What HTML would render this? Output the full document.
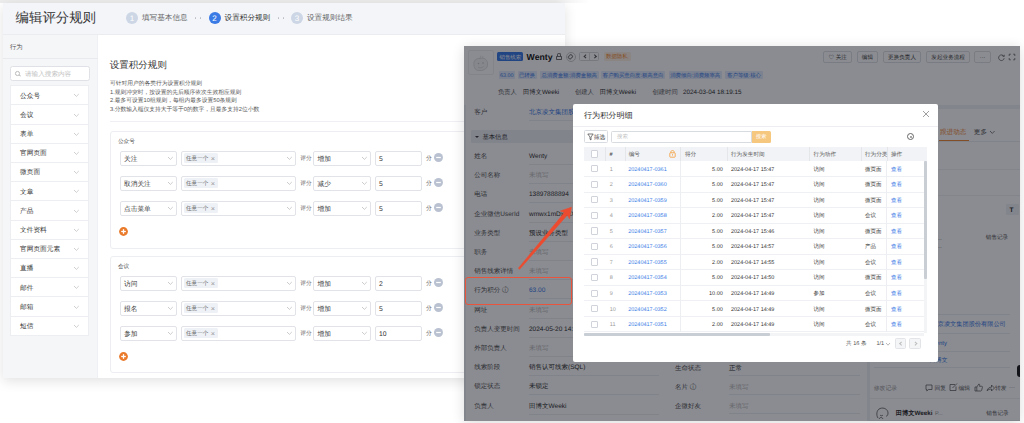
<!DOCTYPE html>
<html><head><meta charset="utf-8">
<style>
*{box-sizing:border-box;margin:0;padding:0}
html,body{width:1024px;height:423px;overflow:hidden;background:#fff;font-family:"Liberation Sans",sans-serif;color:#333;text-rendering:geometricPrecision}
.a{position:absolute}
.t{position:absolute;white-space:nowrap;line-height:1}
</style></head><body>
<div class="a" style="left:0.00px;top:0.00px;width:590.00px;height:3.00px;background:linear-gradient(to right,#ededed 0,#ededed 94%,rgba(237,237,237,0) 100%)"></div>
<div class="a" style="left:3.00px;top:2.60px;width:562.00px;height:375.40px;background:#fff;box-shadow:0 3px 12px rgba(0,0,0,.12)"></div>
<div class="a" style="left:3.00px;top:2.60px;width:562.00px;height:32.40px;background:#f3f5f9"></div>
<div class="a" style="left:3.00px;top:34.40px;width:562.00px;height:0.80px;background:#eaecf0"></div>
<div class="t" style="left:15.60px;top:11px;font-size:13.4px;color:#333;">编辑评分规则</div>
<div class="a" style="left:126.00px;top:11.80px;width:12.00px;height:12.00px;border-radius:50%;background:#cdd6e5"></div>
<div class="t" style="left:126.00px;top:15px;width:12.00px;text-align:center;font-size:8px;color:#fff;">1</div>
<div class="t" style="left:142.00px;top:14px;font-size:7.6px;color:#666;">填写基本信息</div>
<div class="a" style="left:208.60px;top:11.80px;width:12.00px;height:12.00px;border-radius:50%;background:#3b7be6"></div>
<div class="t" style="left:208.60px;top:15px;width:12.00px;text-align:center;font-size:8px;color:#fff;">2</div>
<div class="t" style="left:224.60px;top:14px;font-size:7.6px;color:#333;">设置积分规则</div>
<div class="a" style="left:291.00px;top:11.80px;width:12.00px;height:12.00px;border-radius:50%;background:#cdd6e5"></div>
<div class="t" style="left:291.00px;top:15px;width:12.00px;text-align:center;font-size:8px;color:#fff;">3</div>
<div class="t" style="left:307.00px;top:14px;font-size:7.6px;color:#666;">设置规则结果</div>
<div class="a" style="left:195.00px;top:17.40px;width:1.20px;height:1.20px;background:#b8bcc6;border-radius:50%"></div>
<div class="a" style="left:200.00px;top:17.40px;width:1.20px;height:1.20px;background:#b8bcc6;border-radius:50%"></div>
<div class="a" style="left:277.70px;top:17.40px;width:1.20px;height:1.20px;background:#b8bcc6;border-radius:50%"></div>
<div class="a" style="left:282.70px;top:17.40px;width:1.20px;height:1.20px;background:#b8bcc6;border-radius:50%"></div>
<div class="a" style="left:3.00px;top:35.00px;width:95.00px;height:343.00px;background:#f5f6f8"></div>
<div class="a" style="left:97.00px;top:35.00px;width:1.00px;height:343.00px;background:#eef0f3"></div>
<div class="a" style="left:3.00px;top:57.50px;width:95.00px;height:1.00px;background:#e8eaee"></div>
<div class="t" style="left:10.00px;top:45px;font-size:6.35px;color:#555;">行为</div>
<div class="a" style="left:10.00px;top:66.00px;width:80.00px;height:15.20px;background:#fff;border:1px solid #dfe1e6;border-radius:2.5px"></div>
<div class="a" style="left:15.00px;top:71.00px;width:4.60px;height:4.60px;border:0.8px solid #bbb;border-radius:50%"></div>
<div class="a" style="left:19.00px;top:75.00px;width:1.80px;height:0.80px;background:#bbb;transform:rotate(45deg)"></div>
<div class="t" style="left:25.00px;top:72px;font-size:6.6px;color:#c0c0c0;">请输入搜索内容</div>
<div class="a" style="left:10.40px;top:85.20px;width:79.00px;height:250.60px;background:#fff;border:1px solid #eceef2"></div>
<div class="t" style="left:20.00px;top:94px;font-size:6.7px;color:#333;">公众号</div>
<svg class="a" style="left:73.20px;top:93.30px" width="6.80" height="4.40"><polyline points="1,1 3.40,3.40 5.80,1" fill="none" stroke="#b5b5b5" stroke-width="0.65"/></svg>
<div class="a" style="left:10.40px;top:104.40px;width:79.00px;height:1.00px;background:#eceef2"></div>
<div class="t" style="left:20.00px;top:113px;font-size:6.7px;color:#333;">会议</div>
<svg class="a" style="left:73.20px;top:112.50px" width="6.80" height="4.40"><polyline points="1,1 3.40,3.40 5.80,1" fill="none" stroke="#b5b5b5" stroke-width="0.65"/></svg>
<div class="a" style="left:10.40px;top:123.60px;width:79.00px;height:1.00px;background:#eceef2"></div>
<div class="t" style="left:20.00px;top:132px;font-size:6.7px;color:#333;">表单</div>
<svg class="a" style="left:73.20px;top:131.70px" width="6.80" height="4.40"><polyline points="1,1 3.40,3.40 5.80,1" fill="none" stroke="#b5b5b5" stroke-width="0.65"/></svg>
<div class="a" style="left:10.40px;top:142.80px;width:79.00px;height:1.00px;background:#eceef2"></div>
<div class="t" style="left:20.00px;top:151px;font-size:6.7px;color:#333;">官网页面</div>
<svg class="a" style="left:73.20px;top:150.90px" width="6.80" height="4.40"><polyline points="1,1 3.40,3.40 5.80,1" fill="none" stroke="#b5b5b5" stroke-width="0.65"/></svg>
<div class="a" style="left:10.40px;top:162.00px;width:79.00px;height:1.00px;background:#eceef2"></div>
<div class="t" style="left:20.00px;top:170px;font-size:6.7px;color:#333;">微页面</div>
<svg class="a" style="left:73.20px;top:170.10px" width="6.80" height="4.40"><polyline points="1,1 3.40,3.40 5.80,1" fill="none" stroke="#b5b5b5" stroke-width="0.65"/></svg>
<div class="a" style="left:10.40px;top:181.20px;width:79.00px;height:1.00px;background:#eceef2"></div>
<div class="t" style="left:20.00px;top:190px;font-size:6.7px;color:#333;">文章</div>
<svg class="a" style="left:73.20px;top:189.30px" width="6.80" height="4.40"><polyline points="1,1 3.40,3.40 5.80,1" fill="none" stroke="#b5b5b5" stroke-width="0.65"/></svg>
<div class="a" style="left:10.40px;top:200.40px;width:79.00px;height:1.00px;background:#eceef2"></div>
<div class="t" style="left:20.00px;top:209px;font-size:6.7px;color:#333;">产品</div>
<svg class="a" style="left:73.20px;top:208.50px" width="6.80" height="4.40"><polyline points="1,1 3.40,3.40 5.80,1" fill="none" stroke="#b5b5b5" stroke-width="0.65"/></svg>
<div class="a" style="left:10.40px;top:219.60px;width:79.00px;height:1.00px;background:#eceef2"></div>
<div class="t" style="left:20.00px;top:228px;font-size:6.7px;color:#333;">文件资料</div>
<svg class="a" style="left:73.20px;top:227.70px" width="6.80" height="4.40"><polyline points="1,1 3.40,3.40 5.80,1" fill="none" stroke="#b5b5b5" stroke-width="0.65"/></svg>
<div class="a" style="left:10.40px;top:238.80px;width:79.00px;height:1.00px;background:#eceef2"></div>
<div class="t" style="left:20.00px;top:247px;font-size:6.7px;color:#333;">官网页面元素</div>
<svg class="a" style="left:73.20px;top:246.90px" width="6.80" height="4.40"><polyline points="1,1 3.40,3.40 5.80,1" fill="none" stroke="#b5b5b5" stroke-width="0.65"/></svg>
<div class="a" style="left:10.40px;top:258.00px;width:79.00px;height:1.00px;background:#eceef2"></div>
<div class="t" style="left:20.00px;top:266px;font-size:6.7px;color:#333;">直播</div>
<svg class="a" style="left:73.20px;top:266.10px" width="6.80" height="4.40"><polyline points="1,1 3.40,3.40 5.80,1" fill="none" stroke="#b5b5b5" stroke-width="0.65"/></svg>
<div class="a" style="left:10.40px;top:277.20px;width:79.00px;height:1.00px;background:#eceef2"></div>
<div class="t" style="left:20.00px;top:286px;font-size:6.7px;color:#333;">邮件</div>
<svg class="a" style="left:73.20px;top:285.30px" width="6.80" height="4.40"><polyline points="1,1 3.40,3.40 5.80,1" fill="none" stroke="#b5b5b5" stroke-width="0.65"/></svg>
<div class="a" style="left:10.40px;top:296.40px;width:79.00px;height:1.00px;background:#eceef2"></div>
<div class="t" style="left:20.00px;top:305px;font-size:6.7px;color:#333;">邮箱</div>
<svg class="a" style="left:73.20px;top:304.50px" width="6.80" height="4.40"><polyline points="1,1 3.40,3.40 5.80,1" fill="none" stroke="#b5b5b5" stroke-width="0.65"/></svg>
<div class="a" style="left:10.40px;top:315.60px;width:79.00px;height:1.00px;background:#eceef2"></div>
<div class="t" style="left:20.00px;top:324px;font-size:6.7px;color:#333;">短信</div>
<svg class="a" style="left:73.20px;top:323.70px" width="6.80" height="4.40"><polyline points="1,1 3.40,3.40 5.80,1" fill="none" stroke="#b5b5b5" stroke-width="0.65"/></svg>
<div class="t" style="left:109.80px;top:61px;font-size:9.5px;color:#333;">设置积分规则</div>
<div class="t" style="left:110.00px;top:82px;font-size:5.75px;color:#555;">可针对用户的各类行为设置积分规则</div>
<div class="t" style="left:110.00px;top:91px;font-size:5.75px;color:#555;">1.规则冲突时，按设置的先后顺序依次生效相应规则</div>
<div class="t" style="left:110.00px;top:99px;font-size:5.75px;color:#555;">2.最多可设置10组规则，每组内最多设置50条规则</div>
<div class="t" style="left:110.00px;top:108px;font-size:5.75px;color:#555;">3.分数输入框仅支持大于等于0的数字，且最多支持2位小数</div>
<div class="a" style="left:110.00px;top:121.00px;width:455.00px;height:1.00px;background:#eef0f3"></div>
<div class="a" style="left:109.50px;top:131.40px;width:456.00px;height:117.60px;border:0.8px solid #eceef1;border-radius:3px"></div>
<div class="t" style="left:118.00px;top:140px;font-size:5.6px;color:#444;">公众号</div>
<div class="a" style="left:120.00px;top:150.60px;width:56.60px;height:15.00px;background:#fff;border:1px solid #e1e3e8;border-radius:2px"></div>
<div class="t" style="left:124.00px;top:157px;font-size:6.7px;color:#333;">关注</div>
<svg class="a" style="left:166.60px;top:156.20px" width="6.80" height="4.40"><polyline points="1,1 3.40,3.40 5.80,1" fill="none" stroke="#b0b0b0" stroke-width="0.65"/></svg>
<div class="a" style="left:181.30px;top:150.60px;width:114.50px;height:15.00px;background:#fff;border:1px solid #e1e3e8;border-radius:2px"></div>
<div class="a" style="left:184.40px;top:152.80px;width:33.40px;height:10.60px;background:#eef1f6;border-radius:1.5px"></div>
<div class="t" style="left:186.00px;top:157px;font-size:5.6px;color:#555;">任意一个</div>
<div class="t" style="left:210.80px;top:155px;font-size:7.4px;color:#999;">×</div>
<svg class="a" style="left:286.10px;top:156.20px" width="6.80" height="4.40"><polyline points="1,1 3.40,3.40 5.80,1" fill="none" stroke="#b0b0b0" stroke-width="0.65"/></svg>
<div class="t" style="left:300.30px;top:157px;font-size:5.7px;color:#666;">评分</div>
<div class="a" style="left:313.40px;top:150.60px;width:57.20px;height:15.00px;background:#fff;border:1px solid #e1e3e8;border-radius:2px"></div>
<div class="t" style="left:317.50px;top:157px;font-size:6.7px;color:#333;">增加</div>
<svg class="a" style="left:361.10px;top:156.20px" width="6.80" height="4.40"><polyline points="1,1 3.40,3.40 5.80,1" fill="none" stroke="#b0b0b0" stroke-width="0.65"/></svg>
<div class="a" style="left:374.90px;top:150.60px;width:47.40px;height:15.00px;background:#fff;border:1px solid #e1e3e8;border-radius:2px"></div>
<div class="t" style="left:379.00px;top:157px;font-size:6.8px;color:#333;">5</div>
<div class="t" style="left:426.00px;top:157px;font-size:5.8px;color:#555;">分</div>
<svg class="a" style="left:433.90px;top:153.10px" width="9" height="9" viewBox="0 0 9 9"><circle cx="4.5" cy="4.5" r="4.5" fill="#bac2d1"/><rect x="2.2" y="3.9" width="4.6" height="1.2" fill="#fff"/></svg>
<div class="a" style="left:120.00px;top:175.60px;width:56.60px;height:15.00px;background:#fff;border:1px solid #e1e3e8;border-radius:2px"></div>
<div class="t" style="left:124.00px;top:182px;font-size:6.7px;color:#333;">取消关注</div>
<svg class="a" style="left:166.60px;top:181.20px" width="6.80" height="4.40"><polyline points="1,1 3.40,3.40 5.80,1" fill="none" stroke="#b0b0b0" stroke-width="0.65"/></svg>
<div class="a" style="left:181.30px;top:175.60px;width:114.50px;height:15.00px;background:#fff;border:1px solid #e1e3e8;border-radius:2px"></div>
<div class="a" style="left:184.40px;top:177.80px;width:33.40px;height:10.60px;background:#eef1f6;border-radius:1.5px"></div>
<div class="t" style="left:186.00px;top:182px;font-size:5.6px;color:#555;">任意一个</div>
<div class="t" style="left:210.80px;top:180px;font-size:7.4px;color:#999;">×</div>
<svg class="a" style="left:286.10px;top:181.20px" width="6.80" height="4.40"><polyline points="1,1 3.40,3.40 5.80,1" fill="none" stroke="#b0b0b0" stroke-width="0.65"/></svg>
<div class="t" style="left:300.30px;top:182px;font-size:5.7px;color:#666;">评分</div>
<div class="a" style="left:313.40px;top:175.60px;width:57.20px;height:15.00px;background:#fff;border:1px solid #e1e3e8;border-radius:2px"></div>
<div class="t" style="left:317.50px;top:182px;font-size:6.7px;color:#333;">减少</div>
<svg class="a" style="left:361.10px;top:181.20px" width="6.80" height="4.40"><polyline points="1,1 3.40,3.40 5.80,1" fill="none" stroke="#b0b0b0" stroke-width="0.65"/></svg>
<div class="a" style="left:374.90px;top:175.60px;width:47.40px;height:15.00px;background:#fff;border:1px solid #e1e3e8;border-radius:2px"></div>
<div class="t" style="left:379.00px;top:182px;font-size:6.8px;color:#333;">5</div>
<div class="t" style="left:426.00px;top:182px;font-size:5.8px;color:#555;">分</div>
<svg class="a" style="left:433.90px;top:178.10px" width="9" height="9" viewBox="0 0 9 9"><circle cx="4.5" cy="4.5" r="4.5" fill="#bac2d1"/><rect x="2.2" y="3.9" width="4.6" height="1.2" fill="#fff"/></svg>
<div class="a" style="left:120.00px;top:200.60px;width:56.60px;height:15.00px;background:#fff;border:1px solid #e1e3e8;border-radius:2px"></div>
<div class="t" style="left:124.00px;top:207px;font-size:6.7px;color:#333;">点击菜单</div>
<svg class="a" style="left:166.60px;top:206.20px" width="6.80" height="4.40"><polyline points="1,1 3.40,3.40 5.80,1" fill="none" stroke="#b0b0b0" stroke-width="0.65"/></svg>
<div class="a" style="left:181.30px;top:200.60px;width:114.50px;height:15.00px;background:#fff;border:1px solid #e1e3e8;border-radius:2px"></div>
<div class="a" style="left:184.40px;top:202.80px;width:33.40px;height:10.60px;background:#eef1f6;border-radius:1.5px"></div>
<div class="t" style="left:186.00px;top:207px;font-size:5.6px;color:#555;">任意一个</div>
<div class="t" style="left:210.80px;top:205px;font-size:7.4px;color:#999;">×</div>
<svg class="a" style="left:286.10px;top:206.20px" width="6.80" height="4.40"><polyline points="1,1 3.40,3.40 5.80,1" fill="none" stroke="#b0b0b0" stroke-width="0.65"/></svg>
<div class="t" style="left:300.30px;top:207px;font-size:5.7px;color:#666;">评分</div>
<div class="a" style="left:313.40px;top:200.60px;width:57.20px;height:15.00px;background:#fff;border:1px solid #e1e3e8;border-radius:2px"></div>
<div class="t" style="left:317.50px;top:207px;font-size:6.7px;color:#333;">增加</div>
<svg class="a" style="left:361.10px;top:206.20px" width="6.80" height="4.40"><polyline points="1,1 3.40,3.40 5.80,1" fill="none" stroke="#b0b0b0" stroke-width="0.65"/></svg>
<div class="a" style="left:374.90px;top:200.60px;width:47.40px;height:15.00px;background:#fff;border:1px solid #e1e3e8;border-radius:2px"></div>
<div class="t" style="left:379.00px;top:207px;font-size:6.8px;color:#333;">5</div>
<div class="t" style="left:426.00px;top:207px;font-size:5.8px;color:#555;">分</div>
<svg class="a" style="left:433.90px;top:203.10px" width="9" height="9" viewBox="0 0 9 9"><circle cx="4.5" cy="4.5" r="4.5" fill="#bac2d1"/><rect x="2.2" y="3.9" width="4.6" height="1.2" fill="#fff"/></svg>
<svg class="a" style="left:119.30px;top:227.20px" width="9" height="9" viewBox="0 0 9 9"><circle cx="4.5" cy="4.5" r="4.4" fill="#ea7b2c"/><rect x="2.2" y="3.85" width="4.6" height="1.3" fill="#fff"/><rect x="3.85" y="2.2" width="1.3" height="4.6" fill="#fff"/></svg>
<div class="a" style="left:109.50px;top:256.40px;width:456.00px;height:117.10px;border:0.8px solid #eceef1;border-radius:3px"></div>
<div class="t" style="left:118.00px;top:265px;font-size:5.6px;color:#444;">会议</div>
<div class="a" style="left:120.00px;top:275.60px;width:56.60px;height:15.00px;background:#fff;border:1px solid #e1e3e8;border-radius:2px"></div>
<div class="t" style="left:124.00px;top:282px;font-size:6.7px;color:#333;">访问</div>
<svg class="a" style="left:166.60px;top:281.20px" width="6.80" height="4.40"><polyline points="1,1 3.40,3.40 5.80,1" fill="none" stroke="#b0b0b0" stroke-width="0.65"/></svg>
<div class="a" style="left:181.30px;top:275.60px;width:114.50px;height:15.00px;background:#fff;border:1px solid #e1e3e8;border-radius:2px"></div>
<div class="a" style="left:184.40px;top:277.80px;width:33.40px;height:10.60px;background:#eef1f6;border-radius:1.5px"></div>
<div class="t" style="left:186.00px;top:282px;font-size:5.6px;color:#555;">任意一个</div>
<div class="t" style="left:210.80px;top:280px;font-size:7.4px;color:#999;">×</div>
<svg class="a" style="left:286.10px;top:281.20px" width="6.80" height="4.40"><polyline points="1,1 3.40,3.40 5.80,1" fill="none" stroke="#b0b0b0" stroke-width="0.65"/></svg>
<div class="t" style="left:300.30px;top:282px;font-size:5.7px;color:#666;">评分</div>
<div class="a" style="left:313.40px;top:275.60px;width:57.20px;height:15.00px;background:#fff;border:1px solid #e1e3e8;border-radius:2px"></div>
<div class="t" style="left:317.50px;top:282px;font-size:6.7px;color:#333;">增加</div>
<svg class="a" style="left:361.10px;top:281.20px" width="6.80" height="4.40"><polyline points="1,1 3.40,3.40 5.80,1" fill="none" stroke="#b0b0b0" stroke-width="0.65"/></svg>
<div class="a" style="left:374.90px;top:275.60px;width:47.40px;height:15.00px;background:#fff;border:1px solid #e1e3e8;border-radius:2px"></div>
<div class="t" style="left:379.00px;top:282px;font-size:6.8px;color:#333;">2</div>
<div class="t" style="left:426.00px;top:282px;font-size:5.8px;color:#555;">分</div>
<svg class="a" style="left:433.90px;top:278.10px" width="9" height="9" viewBox="0 0 9 9"><circle cx="4.5" cy="4.5" r="4.5" fill="#bac2d1"/><rect x="2.2" y="3.9" width="4.6" height="1.2" fill="#fff"/></svg>
<div class="a" style="left:120.00px;top:300.60px;width:56.60px;height:15.00px;background:#fff;border:1px solid #e1e3e8;border-radius:2px"></div>
<div class="t" style="left:124.00px;top:307px;font-size:6.7px;color:#333;">报名</div>
<svg class="a" style="left:166.60px;top:306.20px" width="6.80" height="4.40"><polyline points="1,1 3.40,3.40 5.80,1" fill="none" stroke="#b0b0b0" stroke-width="0.65"/></svg>
<div class="a" style="left:181.30px;top:300.60px;width:114.50px;height:15.00px;background:#fff;border:1px solid #e1e3e8;border-radius:2px"></div>
<div class="a" style="left:184.40px;top:302.80px;width:33.40px;height:10.60px;background:#eef1f6;border-radius:1.5px"></div>
<div class="t" style="left:186.00px;top:307px;font-size:5.6px;color:#555;">任意一个</div>
<div class="t" style="left:210.80px;top:305px;font-size:7.4px;color:#999;">×</div>
<svg class="a" style="left:286.10px;top:306.20px" width="6.80" height="4.40"><polyline points="1,1 3.40,3.40 5.80,1" fill="none" stroke="#b0b0b0" stroke-width="0.65"/></svg>
<div class="t" style="left:300.30px;top:307px;font-size:5.7px;color:#666;">评分</div>
<div class="a" style="left:313.40px;top:300.60px;width:57.20px;height:15.00px;background:#fff;border:1px solid #e1e3e8;border-radius:2px"></div>
<div class="t" style="left:317.50px;top:307px;font-size:6.7px;color:#333;">增加</div>
<svg class="a" style="left:361.10px;top:306.20px" width="6.80" height="4.40"><polyline points="1,1 3.40,3.40 5.80,1" fill="none" stroke="#b0b0b0" stroke-width="0.65"/></svg>
<div class="a" style="left:374.90px;top:300.60px;width:47.40px;height:15.00px;background:#fff;border:1px solid #e1e3e8;border-radius:2px"></div>
<div class="t" style="left:379.00px;top:307px;font-size:6.8px;color:#333;">5</div>
<div class="t" style="left:426.00px;top:307px;font-size:5.8px;color:#555;">分</div>
<svg class="a" style="left:433.90px;top:303.10px" width="9" height="9" viewBox="0 0 9 9"><circle cx="4.5" cy="4.5" r="4.5" fill="#bac2d1"/><rect x="2.2" y="3.9" width="4.6" height="1.2" fill="#fff"/></svg>
<div class="a" style="left:120.00px;top:325.60px;width:56.60px;height:15.00px;background:#fff;border:1px solid #e1e3e8;border-radius:2px"></div>
<div class="t" style="left:124.00px;top:332px;font-size:6.7px;color:#333;">参加</div>
<svg class="a" style="left:166.60px;top:331.20px" width="6.80" height="4.40"><polyline points="1,1 3.40,3.40 5.80,1" fill="none" stroke="#b0b0b0" stroke-width="0.65"/></svg>
<div class="a" style="left:181.30px;top:325.60px;width:114.50px;height:15.00px;background:#fff;border:1px solid #e1e3e8;border-radius:2px"></div>
<div class="a" style="left:184.40px;top:327.80px;width:33.40px;height:10.60px;background:#eef1f6;border-radius:1.5px"></div>
<div class="t" style="left:186.00px;top:332px;font-size:5.6px;color:#555;">任意一个</div>
<div class="t" style="left:210.80px;top:330px;font-size:7.4px;color:#999;">×</div>
<svg class="a" style="left:286.10px;top:331.20px" width="6.80" height="4.40"><polyline points="1,1 3.40,3.40 5.80,1" fill="none" stroke="#b0b0b0" stroke-width="0.65"/></svg>
<div class="t" style="left:300.30px;top:332px;font-size:5.7px;color:#666;">评分</div>
<div class="a" style="left:313.40px;top:325.60px;width:57.20px;height:15.00px;background:#fff;border:1px solid #e1e3e8;border-radius:2px"></div>
<div class="t" style="left:317.50px;top:332px;font-size:6.7px;color:#333;">增加</div>
<svg class="a" style="left:361.10px;top:331.20px" width="6.80" height="4.40"><polyline points="1,1 3.40,3.40 5.80,1" fill="none" stroke="#b0b0b0" stroke-width="0.65"/></svg>
<div class="a" style="left:374.90px;top:325.60px;width:47.40px;height:15.00px;background:#fff;border:1px solid #e1e3e8;border-radius:2px"></div>
<div class="t" style="left:379.00px;top:332px;font-size:6.8px;color:#333;">10</div>
<div class="t" style="left:426.00px;top:332px;font-size:5.8px;color:#555;">分</div>
<svg class="a" style="left:433.90px;top:328.10px" width="9" height="9" viewBox="0 0 9 9"><circle cx="4.5" cy="4.5" r="4.5" fill="#bac2d1"/><rect x="2.2" y="3.9" width="4.6" height="1.2" fill="#fff"/></svg>
<svg class="a" style="left:119.30px;top:352.20px" width="9" height="9" viewBox="0 0 9 9"><circle cx="4.5" cy="4.5" r="4.4" fill="#ea7b2c"/><rect x="2.2" y="3.85" width="4.6" height="1.3" fill="#fff"/><rect x="3.85" y="2.2" width="1.3" height="4.6" fill="#fff"/></svg>
<div class="a" style="left:464.00px;top:46.00px;width:556.00px;height:374.50px;background:#f0f2f5;box-shadow:0 2px 12px rgba(0,0,0,.14)"></div>
<div class="a" style="left:464.00px;top:46.00px;width:556.00px;height:58.50px;background:#fff"></div>
<div class="a" style="left:467.70px;top:50.00px;width:26.30px;height:25.40px;background:#fff;border:0.6px solid #f0f1f3;border-radius:2px"></div>
<svg class="a" style="left:470.00px;top:52.00px" width="22" height="22" viewBox="0 0 22 22"><path d="M4,13 C3,9 6,6 10,6.5 C14,5 18,8 17.5,12 C18,16 14,19 10,18.5 C6,19 4,16.5 4,13 Z" fill="#f6f6f7" stroke="#d5d6d9" stroke-width="0.7"/><circle cx="8.5" cy="11.5" r="0.8" fill="#c8c9cc"/><circle cx="13" cy="11" r="0.8" fill="#c8c9cc"/><path d="M8,15 C10,16.5 12,16 13.5,14.5" fill="none" stroke="#cfd0d3" stroke-width="0.6"/><path d="M10,6.5 L11,3.5 M13,4 L12.5,6" stroke="#d5d6d9" stroke-width="0.6"/></svg>
<div class="a" style="left:497.30px;top:52.30px;width:26.10px;height:8.80px;background:#3b7be6;border-radius:1.5px"></div>
<div class="t" style="left:499.50px;top:56px;font-size:5.4px;color:#fff;">销售线索</div>
<div class="t" style="left:526.60px;top:53px;font-size:8.7px;color:#222;font-weight:bold">Wenty</div>
<div class="a" style="left:555.50px;top:55.60px;width:6.40px;height:4.60px;border:0.8px solid #777;border-radius:0.8px"></div>
<div class="a" style="left:556.80px;top:52.60px;width:3.80px;height:4.00px;border:0.8px solid #777;border-bottom:none;border-radius:2px 2px 0 0"></div>
<div class="a" style="left:565.50px;top:51.50px;width:10.00px;height:10.00px;border:0.8px solid #ccc;border-radius:50%"></div>
<div class="a" style="left:568.00px;top:54.50px;width:4.50px;height:4.00px;border:0.8px solid #888;border-radius:1px;transform:rotate(-45deg)"></div>
<div class="a" style="left:579.30px;top:51.60px;width:20.20px;height:9.80px;border:0.8px solid #d8dbe0;border-radius:1.5px"></div>
<div class="a" style="left:589.40px;top:51.60px;width:0.80px;height:9.80px;background:#d8dbe0"></div>
<div class="a" style="left:583.5px;top:54.6px;width:3.4px;height:3.4px;border-left:0.8px solid #555;border-bottom:0.8px solid #555;transform:rotate(45deg)"></div>
<div class="a" style="left:592.8px;top:54.6px;width:3.4px;height:3.4px;border-right:0.8px solid #555;border-top:0.8px solid #555;transform:rotate(45deg)"></div>
<div class="a" style="left:604.20px;top:52.00px;width:26.40px;height:9.00px;background:#fdf1e6;border-radius:1.5px"></div>
<div class="t" style="left:606.00px;top:55px;font-size:5.4px;color:#f38a2c;">数据隐私</div>
<div class="a" style="left:498.50px;top:70.60px;width:16.40px;height:8.80px;background:#e4edfc;border-radius:1px"></div>
<div class="t" style="left:498.50px;top:74px;width:16.40px;text-align:center;font-size:5.4px;color:#3b7be6;">63.00</div>
<div class="a" style="left:517.50px;top:70.60px;width:19.10px;height:8.80px;background:#e4edfc;border-radius:1px"></div>
<div class="t" style="left:517.50px;top:74px;width:19.10px;text-align:center;font-size:5.4px;color:#3b7be6;">已转换</div>
<div class="a" style="left:539.50px;top:70.60px;width:59.50px;height:8.80px;background:#e4edfc;border-radius:1px"></div>
<div class="t" style="left:539.50px;top:74px;width:59.50px;text-align:center;font-size:5.4px;color:#3b7be6;">总消费金额:消费金额高</div>
<div class="a" style="left:601.30px;top:70.60px;width:63.70px;height:8.80px;background:#e4edfc;border-radius:1px"></div>
<div class="t" style="left:601.30px;top:74px;width:63.70px;text-align:center;font-size:5.4px;color:#3b7be6;">客户购买意向度:极高意向</div>
<div class="a" style="left:668.70px;top:70.60px;width:53.10px;height:8.80px;background:#e4edfc;border-radius:1px"></div>
<div class="t" style="left:668.70px;top:74px;width:53.10px;text-align:center;font-size:5.4px;color:#3b7be6;">消费倾向:消费频率高</div>
<div class="a" style="left:725.30px;top:70.60px;width:37.50px;height:8.80px;background:#e4edfc;border-radius:1px"></div>
<div class="t" style="left:725.30px;top:74px;width:37.50px;text-align:center;font-size:5.4px;color:#3b7be6;">客户等级:核心</div>
<div class="t" style="left:498.00px;top:90px;font-size:6.3px;color:#666;">负责人</div>
<div class="t" style="left:523.00px;top:90px;font-size:6.3px;color:#333;">田博文Weeki</div>
<div class="t" style="left:575.00px;top:90px;font-size:6.3px;color:#666;">创建人</div>
<div class="t" style="left:599.80px;top:90px;font-size:6.3px;color:#333;">田博文Weeki</div>
<div class="t" style="left:652.50px;top:90px;font-size:6.3px;color:#666;">创建时间</div>
<div class="t" style="left:683.00px;top:90px;font-size:6.3px;color:#333;">2024-03-04 18:19:15</div>
<div class="a" style="left:823.00px;top:50.80px;width:29.40px;height:12.10px;background:#fff;border:0.8px solid #dfe2e6;border-radius:2px"></div>
<div class="t" style="left:823.00px;top:56px;width:29.40px;text-align:center;font-size:5.6px;color:#444;">♡ 关注</div>
<div class="a" style="left:856.50px;top:50.80px;width:21.90px;height:12.10px;background:#fff;border:0.8px solid #dfe2e6;border-radius:2px"></div>
<div class="t" style="left:856.50px;top:56px;width:21.90px;text-align:center;font-size:5.6px;color:#444;">编辑</div>
<div class="a" style="left:882.80px;top:50.80px;width:38.50px;height:12.10px;background:#fff;border:0.8px solid #dfe2e6;border-radius:2px"></div>
<div class="t" style="left:882.80px;top:56px;width:38.50px;text-align:center;font-size:5.6px;color:#444;">更换负责人</div>
<div class="a" style="left:926.00px;top:50.80px;width:44.30px;height:12.10px;background:#fff;border:0.8px solid #dfe2e6;border-radius:2px"></div>
<div class="t" style="left:926.00px;top:56px;width:44.30px;text-align:center;font-size:5.6px;color:#444;">发起业务流程</div>
<div class="a" style="left:974.00px;top:50.80px;width:17.30px;height:12.10px;background:#fff;border:0.8px solid #dfe2e6;border-radius:2px"></div>
<div class="t" style="left:974.00px;top:56px;width:17.30px;text-align:center;font-size:5.6px;color:#444;">···</div>
<svg class="a" style="left:996.50px;top:52.80px" width="9" height="9" viewBox="0 0 9 9"><path d="M6.9,3.4 A2.8,2.8 0 1 0 7.2,5.2" fill="none" stroke="#555" stroke-width="0.7"/><path d="M5.4,2.9 L7.1,3.5 L7.3,1.8" fill="none" stroke="#555" stroke-width="0.7"/></svg>
<svg class="a" style="left:1008.00px;top:53.00px" width="8" height="8" viewBox="0 0 8 8"><path d="M1.2,3 V1.2 H2.8 M5.2,1.2 H6.8 V3 M6.8,5 V6.8 H5.2 M2.8,6.8 H1.2 V5" fill="none" stroke="#555" stroke-width="0.7"/></svg>
<div class="a" style="left:466.30px;top:104.50px;width:400.50px;height:316.00px;background:#fff"></div>
<div class="t" style="left:474.30px;top:110px;font-size:6.5px;color:#555;">客户</div>
<div class="t" style="left:529.00px;top:110px;font-size:6.5px;color:#3b7be6;">北京凌文集团股份有限公司</div>
<div class="a" style="left:529.00px;top:119.80px;width:130.00px;height:0.60px;background:#eceef2"></div>
<div class="a" style="left:471.00px;top:130.30px;width:390.00px;height:13.10px;background:#eef1f6;border-radius:1px"></div>
<div class="a" style="left:474.5px;top:135.5px;width:0;height:0;border-left:2.2px solid transparent;border-right:2.2px solid transparent;border-top:2.6px solid #444"></div>
<div class="t" style="left:482.40px;top:135px;font-size:6.35px;color:#333;">基本信息</div>
<div class="t" style="left:474.30px;top:154px;font-size:6.5px;color:#555;">姓名</div>
<div class="t" style="left:529.00px;top:154px;font-size:6.5px;color:#333;">Wenty</div>
<div class="a" style="left:529.00px;top:164.00px;width:130.00px;height:0.60px;background:#eceef2"></div>
<div class="t" style="left:474.30px;top:173px;font-size:6.5px;color:#555;">公司名称</div>
<div class="t" style="left:529.00px;top:173px;font-size:6.5px;color:#bbb;">未填写</div>
<div class="a" style="left:529.00px;top:183.20px;width:130.00px;height:0.60px;background:#eceef2"></div>
<div class="t" style="left:474.30px;top:192px;font-size:6.5px;color:#555;">电话</div>
<div class="t" style="left:529.00px;top:192px;font-size:6.5px;color:#333;">13897888894</div>
<div class="a" style="left:529.00px;top:202.40px;width:130.00px;height:0.60px;background:#eceef2"></div>
<div class="t" style="left:474.30px;top:212px;font-size:6.5px;color:#555;">企业微信UserId</div>
<div class="t" style="left:529.00px;top:212px;font-size:6.5px;color:#333;">wmwx1mDx1xXk</div>
<div class="a" style="left:529.00px;top:221.60px;width:130.00px;height:0.60px;background:#eceef2"></div>
<div class="t" style="left:474.30px;top:231px;font-size:6.5px;color:#555;">业务类型</div>
<div class="t" style="left:529.00px;top:231px;font-size:6.5px;color:#333;">预设业务类型</div>
<div class="a" style="left:529.00px;top:240.80px;width:130.00px;height:0.60px;background:#eceef2"></div>
<div class="t" style="left:474.30px;top:250px;font-size:6.5px;color:#555;">职务</div>
<div class="t" style="left:529.00px;top:250px;font-size:6.5px;color:#bbb;">未填写</div>
<div class="a" style="left:529.00px;top:260.00px;width:130.00px;height:0.60px;background:#eceef2"></div>
<div class="t" style="left:474.30px;top:269px;font-size:6.5px;color:#555;">销售线索详情</div>
<div class="t" style="left:529.00px;top:269px;font-size:6.5px;color:#bbb;">未填写</div>
<div class="a" style="left:529.00px;top:279.20px;width:130.00px;height:0.60px;background:#eceef2"></div>
<div class="t" style="left:474.30px;top:288px;font-size:6.5px;color:#555;">行为积分 ⓘ</div>
<div class="t" style="left:529.00px;top:288px;font-size:6.5px;color:#3b7be6;">63.00</div>
<div class="a" style="left:529.00px;top:298.40px;width:130.00px;height:0.60px;background:#eceef2"></div>
<div class="t" style="left:474.30px;top:308px;font-size:6.5px;color:#555;">网址</div>
<div class="t" style="left:529.00px;top:308px;font-size:6.5px;color:#bbb;">未填写</div>
<div class="a" style="left:529.00px;top:317.60px;width:130.00px;height:0.60px;background:#eceef2"></div>
<div class="t" style="left:474.30px;top:327px;font-size:6.5px;color:#555;">负责人变更时间</div>
<div class="t" style="left:529.00px;top:327px;font-size:6.5px;color:#333;">2024-05-20 14:32</div>
<div class="a" style="left:529.00px;top:336.80px;width:130.00px;height:0.60px;background:#eceef2"></div>
<div class="t" style="left:474.30px;top:346px;font-size:6.5px;color:#555;">外部负责人</div>
<div class="t" style="left:529.00px;top:346px;font-size:6.5px;color:#bbb;">未填写</div>
<div class="a" style="left:529.00px;top:356.00px;width:130.00px;height:0.60px;background:#eceef2"></div>
<div class="t" style="left:474.30px;top:365px;font-size:6.5px;color:#555;">线索阶段</div>
<div class="t" style="left:529.00px;top:365px;font-size:6.5px;color:#333;">销售认可线索(SQL)</div>
<div class="a" style="left:529.00px;top:375.20px;width:130.00px;height:0.60px;background:#eceef2"></div>
<div class="t" style="left:474.30px;top:384px;font-size:6.5px;color:#555;">锁定状态</div>
<div class="t" style="left:529.00px;top:384px;font-size:6.5px;color:#333;">未锁定</div>
<div class="a" style="left:529.00px;top:394.40px;width:130.00px;height:0.60px;background:#eceef2"></div>
<div class="t" style="left:474.30px;top:404px;font-size:6.5px;color:#555;">负责人</div>
<div class="t" style="left:529.00px;top:404px;font-size:6.5px;color:#333;">田博文Weeki</div>
<div class="a" style="left:529.00px;top:413.60px;width:130.00px;height:0.60px;background:#eceef2"></div>
<div class="t" style="left:675.00px;top:366px;font-size:6.5px;color:#555;">生命状态</div>
<div class="t" style="left:729.00px;top:366px;font-size:6.5px;color:#333;">正常</div>
<div class="a" style="left:729.00px;top:374.90px;width:131.00px;height:0.60px;background:#eceef2"></div>
<div class="t" style="left:675.00px;top:385px;font-size:6.5px;color:#555;">名片 ⓘ</div>
<div class="t" style="left:729.00px;top:385px;font-size:6.5px;color:#bbb;">未填写</div>
<div class="a" style="left:729.00px;top:394.00px;width:131.00px;height:0.60px;background:#eceef2"></div>
<div class="t" style="left:675.00px;top:404px;font-size:6.5px;color:#555;">企微好友</div>
<div class="t" style="left:729.00px;top:404px;font-size:6.5px;color:#bbb;">未填写</div>
<div class="a" style="left:729.00px;top:413.10px;width:131.00px;height:0.60px;background:#eceef2"></div>
<div class="a" style="left:869.80px;top:108.80px;width:150.20px;height:311.70px;background:#fff"></div>
<div class="t" style="left:940.00px;top:130px;font-size:6.6px;color:#ef8d3e;">跟进动态</div>
<div class="a" style="left:939.00px;top:140.20px;width:30.20px;height:1.20px;background:#ef8d3e"></div>
<div class="t" style="left:973.80px;top:130px;font-size:6.6px;color:#555;">更多</div>
<svg class="a" style="left:988.50px;top:130.00px" width="6.60" height="4.40"><polyline points="1,1 3.30,3.40 5.60,1" fill="none" stroke="#555" stroke-width="0.7"/></svg>
<div class="a" style="left:869.80px;top:141.40px;width:150.20px;height:0.60px;background:#eceef2"></div>
<div class="a" style="left:869.80px;top:169.30px;width:150.20px;height:0.60px;background:#f1f2f5"></div>
<div class="a" style="left:869.80px;top:194.80px;width:150.20px;height:0.60px;background:#f1f2f5"></div>
<div class="a" style="left:1006.00px;top:203.70px;width:13.00px;height:11.80px;background:#f0f2f5;border-radius:1px"></div>
<div class="t" style="left:1009.50px;top:208px;font-size:6.5px;color:#333;font-weight:bold">T</div>
<div class="t" style="left:985.80px;top:236px;font-size:5.6px;color:#555;">销售记录</div>
<div class="t" style="left:936.00px;top:236px;font-size:6px;color:#777;">…</div>
<div class="t" style="left:936.00px;top:244px;font-size:6px;color:#777;">…</div>
<div class="a" style="left:874.00px;top:314.00px;width:136.00px;height:0.60px;background:#eceef2"></div>
<div class="a" style="left:874.00px;top:367.40px;width:136.00px;height:0.60px;background:#eceef2"></div>
<div class="t" style="left:931.50px;top:322px;font-size:6.2px;color:#3b7be6;">北京凌文集团股份有限公司</div>
<div class="a" style="left:874.00px;top:332.50px;width:136.00px;height:0.60px;background:#eceef2"></div>
<div class="t" style="left:930.00px;top:341px;font-size:6.0px;color:#3b7be6;">Wenty</div>
<div class="a" style="left:874.00px;top:351.00px;width:136.00px;height:0.60px;background:#eceef2"></div>
<div class="t" style="left:929.60px;top:358px;font-size:6.0px;color:#3b7be6;">田博文</div>
<div class="a" style="left:1016.80px;top:364.50px;width:3.20px;height:12.00px;background:#222;border-radius:6px 0 0 6px"></div>
<div class="t" style="left:873.80px;top:387px;font-size:5.8px;color:#999;">修改记录</div>
<div class="t" style="left:934.50px;top:387px;font-size:5.8px;color:#666;">回复</div>
<div class="t" style="left:958.40px;top:387px;font-size:5.8px;color:#666;">编辑</div>
<div class="t" style="left:995.00px;top:387px;font-size:5.8px;color:#666;">转发</div>
<svg class="a" style="left:924.50px;top:383.50px" width="8" height="8" viewBox="0 0 8 8"><path d="M1,1 H7 V5.5 H3.5 L1.8,7 V5.5 H1 Z" fill="none" stroke="#555" stroke-width="0.7"/></svg>
<svg class="a" style="left:948.50px;top:383.00px" width="9" height="9" viewBox="0 0 9 9"><path d="M6,1.5 H1 V7.5 H7 V3.5" fill="none" stroke="#555" stroke-width="0.7"/><path d="M3.5,5 L8,0.5" stroke="#555" stroke-width="0.7"/></svg>
<svg class="a" style="left:973.50px;top:382.50px" width="9" height="9" viewBox="0 0 9 9"><path d="M1,4 H2.8 V8 H1 Z M2.8,4 L4.8,1 C5.8,1 5.8,2 5.5,3.3 H7.8 C8.4,3.3 8.6,3.8 8.4,4.4 L7.6,7.4 C7.4,7.9 7,8 6.6,8 H2.8" fill="none" stroke="#555" stroke-width="0.7"/></svg>
<svg class="a" style="left:985.50px;top:383.50px" width="9" height="8" viewBox="0 0 9 8"><path d="M1,6.8 C1.8,4 3.5,3.2 5.5,3.2 V1 L8.5,4 L5.5,7 V5 C3.8,5 2.2,5.5 1,6.8 Z" fill="none" stroke="#555" stroke-width="0.7"/></svg>
<div class="t" style="left:1009.00px;top:385px;font-size:6px;color:#777;">···</div>
<div class="a" style="left:869.80px;top:397.60px;width:150.20px;height:0.60px;background:#f1f2f5"></div>
<svg class="a" style="left:875.00px;top:406.00px" width="15" height="15" viewBox="0 0 15 15"><path d="M3,12 C1,9 1.5,4 5,2.5 C9,1 13,3.5 13,7 C13,9 12,10 11,10.5 M5,9 C6,10 7,10 8,9 M4,13 C5,11 7,11 8,13" fill="none" stroke="#444" stroke-width="0.7"/></svg>
<div class="t" style="left:895.70px;top:411px;font-size:6.25px;color:#333;font-weight:bold">田博文Weeki</div>
<div class="t" style="left:935.00px;top:412px;font-size:5.6px;color:#999;">P...</div>
<div class="t" style="left:986.30px;top:412px;font-size:5.6px;color:#555;">销售记录</div>
<div class="a" style="left:464.00px;top:46.00px;width:556.00px;height:374.50px;background:rgba(3,5,16,.46)"></div>
<div class="a" style="left:573.00px;top:103.60px;width:365.20px;height:258.40px;background:#fff;border-radius:2px"></div>
<div class="t" style="left:584.00px;top:112px;font-size:8.1px;color:#333;">行为积分明细</div>
<svg class="a" style="left:921.50px;top:110.00px" width="8" height="8" viewBox="0 0 8 8"><path d="M1,1 L7,7 M7,1 L1,7" stroke="#888" stroke-width="0.8"/></svg>
<div class="a" style="left:573.00px;top:126.00px;width:365.20px;height:0.70px;background:#eceef2"></div>
<div class="a" style="left:584.00px;top:130.20px;width:23.70px;height:12.40px;border:0.8px solid #d8dbe0;border-radius:1.5px"></div>
<div class="t" style="left:593.80px;top:136px;font-size:5.8px;color:#333;">筛选</div>
<svg class="a" style="left:586.50px;top:132.50px" width="7" height="8" viewBox="0 0 7 8"><path d="M0.8,1 H6.2 L4,4 V7 L3,6.3 V4 Z" fill="none" stroke="#444" stroke-width="0.7" stroke-linejoin="round"/></svg>
<div class="a" style="left:611.30px;top:130.50px;width:141.00px;height:12.10px;border:0.8px solid #d8dbe0;border-radius:1.5px 0 0 1.5px"></div>
<div class="t" style="left:617.00px;top:135px;font-size:5.4px;color:#c0c0c0;">搜索</div>
<div class="a" style="left:752.20px;top:130.50px;width:18.50px;height:12.10px;background:#f6c77f;border-radius:0 1.5px 1.5px 0"></div>
<div class="t" style="left:756.00px;top:135px;font-size:5.2px;color:#fff;">搜索</div>
<div class="a" style="left:907.30px;top:133.30px;width:7.00px;height:7.00px;border:0.8px solid #666;border-radius:50%"></div>
<div class="a" style="left:909.60px;top:135.60px;width:2.40px;height:2.40px;border:0.7px solid #666;border-radius:50%"></div>
<div class="a" style="left:584.00px;top:147.00px;width:343.30px;height:14.00px;background:#f1f3f6"></div>
<div class="a" style="left:604.70px;top:147.00px;width:0.60px;height:14.00px;background:#e4e6ea"></div>
<div class="a" style="left:625.00px;top:147.00px;width:0.60px;height:14.00px;background:#e4e6ea"></div>
<div class="a" style="left:680.40px;top:147.00px;width:0.60px;height:14.00px;background:#e4e6ea"></div>
<div class="a" style="left:726.80px;top:147.00px;width:0.60px;height:14.00px;background:#e4e6ea"></div>
<div class="a" style="left:809.30px;top:147.00px;width:0.60px;height:14.00px;background:#e4e6ea"></div>
<div class="a" style="left:860.60px;top:147.00px;width:0.60px;height:14.00px;background:#e4e6ea"></div>
<div class="a" style="left:886.70px;top:147.00px;width:0.60px;height:14.00px;background:#e4e6ea"></div>
<div class="a" style="left:590.70px;top:150.40px;width:7.20px;height:7.20px;background:#fff;border:0.8px solid #d0d3d9;border-radius:1px"></div>
<div class="t" style="left:609.50px;top:153px;font-size:5.6px;color:#555;font-weight:bold">#</div>
<div class="t" style="left:628.70px;top:153px;font-size:5.6px;color:#555;">编号</div>
<svg class="a" style="left:669.30px;top:149.00px" width="7" height="9" viewBox="0 0 7 9"><rect x="0.8" y="3.8" width="5.4" height="4.4" rx="0.6" fill="none" stroke="#f5a44a" stroke-width="0.9"/><path d="M1.9,3.8 V2.6 C1.9,1.2 5.1,1.2 5.1,2.6 V3.8" fill="none" stroke="#f5a44a" stroke-width="0.9"/><path d="M3.5,5.2 V6.6" stroke="#f5a44a" stroke-width="0.9"/></svg>
<div class="t" style="left:684.90px;top:153px;font-size:5.6px;color:#555;">得分</div>
<div class="t" style="left:731.00px;top:153px;font-size:5.6px;color:#555;">行为发生时间</div>
<div class="t" style="left:813.60px;top:153px;font-size:5.6px;color:#555;">行为动作</div>
<div class="t" style="left:865.00px;top:153px;font-size:5.6px;color:#555;">行为分类</div>
<div class="t" style="left:891.00px;top:153px;font-size:5.6px;color:#555;">操作</div>
<div class="a" style="left:584.00px;top:175.95px;width:339.50px;height:0.60px;background:#eef0f3"></div>
<div class="a" style="left:591.00px;top:165.18px;width:7.20px;height:7.20px;background:#fff;border:0.8px solid #d0d3d9;border-radius:1px"></div>
<div class="t" style="left:609.80px;top:168px;font-size:5.5px;color:#999;">1</div>
<div class="t" style="left:628.20px;top:168px;font-size:5.5px;color:#3b7be6;">20240417-0361</div>
<div class="t" style="left:690.00px;top:168px;width:32.80px;text-align:right;font-size:5.5px;color:#333;">5.00</div>
<div class="t" style="left:731.00px;top:168px;font-size:5.5px;color:#333;">2024-04-17 15:47</div>
<div class="t" style="left:813.60px;top:168px;font-size:5.5px;color:#333;">访问</div>
<div class="t" style="left:865.00px;top:168px;font-size:5.5px;color:#333;">微页面</div>
<div class="t" style="left:891.00px;top:168px;font-size:5.5px;color:#3b7be6;">查看</div>
<div class="a" style="left:584.00px;top:191.50px;width:339.50px;height:0.60px;background:#eef0f3"></div>
<div class="a" style="left:591.00px;top:180.73px;width:7.20px;height:7.20px;background:#fff;border:0.8px solid #d0d3d9;border-radius:1px"></div>
<div class="t" style="left:609.80px;top:183px;font-size:5.5px;color:#999;">2</div>
<div class="t" style="left:628.20px;top:183px;font-size:5.5px;color:#3b7be6;">20240417-0360</div>
<div class="t" style="left:690.00px;top:183px;width:32.80px;text-align:right;font-size:5.5px;color:#333;">5.00</div>
<div class="t" style="left:731.00px;top:183px;font-size:5.5px;color:#333;">2024-04-17 15:47</div>
<div class="t" style="left:813.60px;top:183px;font-size:5.5px;color:#333;">访问</div>
<div class="t" style="left:865.00px;top:183px;font-size:5.5px;color:#333;">微页面</div>
<div class="t" style="left:891.00px;top:183px;font-size:5.5px;color:#3b7be6;">查看</div>
<div class="a" style="left:584.00px;top:207.05px;width:339.50px;height:0.60px;background:#eef0f3"></div>
<div class="a" style="left:591.00px;top:196.28px;width:7.20px;height:7.20px;background:#fff;border:0.8px solid #d0d3d9;border-radius:1px"></div>
<div class="t" style="left:609.80px;top:199px;font-size:5.5px;color:#999;">3</div>
<div class="t" style="left:628.20px;top:199px;font-size:5.5px;color:#3b7be6;">20240417-0359</div>
<div class="t" style="left:690.00px;top:199px;width:32.80px;text-align:right;font-size:5.5px;color:#333;">5.00</div>
<div class="t" style="left:731.00px;top:199px;font-size:5.5px;color:#333;">2024-04-17 15:47</div>
<div class="t" style="left:813.60px;top:199px;font-size:5.5px;color:#333;">访问</div>
<div class="t" style="left:865.00px;top:199px;font-size:5.5px;color:#333;">微页面</div>
<div class="t" style="left:891.00px;top:199px;font-size:5.5px;color:#3b7be6;">查看</div>
<div class="a" style="left:584.00px;top:222.60px;width:339.50px;height:0.60px;background:#eef0f3"></div>
<div class="a" style="left:591.00px;top:211.83px;width:7.20px;height:7.20px;background:#fff;border:0.8px solid #d0d3d9;border-radius:1px"></div>
<div class="t" style="left:609.80px;top:214px;font-size:5.5px;color:#999;">4</div>
<div class="t" style="left:628.20px;top:214px;font-size:5.5px;color:#3b7be6;">20240417-0358</div>
<div class="t" style="left:690.00px;top:214px;width:32.80px;text-align:right;font-size:5.5px;color:#333;">2.00</div>
<div class="t" style="left:731.00px;top:214px;font-size:5.5px;color:#333;">2024-04-17 15:47</div>
<div class="t" style="left:813.60px;top:214px;font-size:5.5px;color:#333;">访问</div>
<div class="t" style="left:865.00px;top:214px;font-size:5.5px;color:#333;">会议</div>
<div class="t" style="left:891.00px;top:214px;font-size:5.5px;color:#3b7be6;">查看</div>
<div class="a" style="left:584.00px;top:238.15px;width:339.50px;height:0.60px;background:#eef0f3"></div>
<div class="a" style="left:591.00px;top:227.38px;width:7.20px;height:7.20px;background:#fff;border:0.8px solid #d0d3d9;border-radius:1px"></div>
<div class="t" style="left:609.80px;top:230px;font-size:5.5px;color:#999;">5</div>
<div class="t" style="left:628.20px;top:230px;font-size:5.5px;color:#3b7be6;">20240417-0357</div>
<div class="t" style="left:690.00px;top:230px;width:32.80px;text-align:right;font-size:5.5px;color:#333;">5.00</div>
<div class="t" style="left:731.00px;top:230px;font-size:5.5px;color:#333;">2024-04-17 15:46</div>
<div class="t" style="left:813.60px;top:230px;font-size:5.5px;color:#333;">访问</div>
<div class="t" style="left:865.00px;top:230px;font-size:5.5px;color:#333;">微页面</div>
<div class="t" style="left:891.00px;top:230px;font-size:5.5px;color:#3b7be6;">查看</div>
<div class="a" style="left:584.00px;top:253.70px;width:339.50px;height:0.60px;background:#eef0f3"></div>
<div class="a" style="left:591.00px;top:242.93px;width:7.20px;height:7.20px;background:#fff;border:0.8px solid #d0d3d9;border-radius:1px"></div>
<div class="t" style="left:609.80px;top:245px;font-size:5.5px;color:#999;">6</div>
<div class="t" style="left:628.20px;top:245px;font-size:5.5px;color:#3b7be6;">20240417-0356</div>
<div class="t" style="left:690.00px;top:245px;width:32.80px;text-align:right;font-size:5.5px;color:#333;">5.00</div>
<div class="t" style="left:731.00px;top:245px;font-size:5.5px;color:#333;">2024-04-17 14:57</div>
<div class="t" style="left:813.60px;top:245px;font-size:5.5px;color:#333;">访问</div>
<div class="t" style="left:865.00px;top:245px;font-size:5.5px;color:#333;">产品</div>
<div class="t" style="left:891.00px;top:245px;font-size:5.5px;color:#3b7be6;">查看</div>
<div class="a" style="left:584.00px;top:269.25px;width:339.50px;height:0.60px;background:#eef0f3"></div>
<div class="a" style="left:591.00px;top:258.47px;width:7.20px;height:7.20px;background:#fff;border:0.8px solid #d0d3d9;border-radius:1px"></div>
<div class="t" style="left:609.80px;top:261px;font-size:5.5px;color:#999;">7</div>
<div class="t" style="left:628.20px;top:261px;font-size:5.5px;color:#3b7be6;">20240417-0355</div>
<div class="t" style="left:690.00px;top:261px;width:32.80px;text-align:right;font-size:5.5px;color:#333;">2.00</div>
<div class="t" style="left:731.00px;top:261px;font-size:5.5px;color:#333;">2024-04-17 14:55</div>
<div class="t" style="left:813.60px;top:261px;font-size:5.5px;color:#333;">访问</div>
<div class="t" style="left:865.00px;top:261px;font-size:5.5px;color:#333;">会议</div>
<div class="t" style="left:891.00px;top:261px;font-size:5.5px;color:#3b7be6;">查看</div>
<div class="a" style="left:584.00px;top:284.80px;width:339.50px;height:0.60px;background:#eef0f3"></div>
<div class="a" style="left:591.00px;top:274.02px;width:7.20px;height:7.20px;background:#fff;border:0.8px solid #d0d3d9;border-radius:1px"></div>
<div class="t" style="left:609.80px;top:276px;font-size:5.5px;color:#999;">8</div>
<div class="t" style="left:628.20px;top:276px;font-size:5.5px;color:#3b7be6;">20240417-0354</div>
<div class="t" style="left:690.00px;top:276px;width:32.80px;text-align:right;font-size:5.5px;color:#333;">5.00</div>
<div class="t" style="left:731.00px;top:276px;font-size:5.5px;color:#333;">2024-04-17 14:50</div>
<div class="t" style="left:813.60px;top:276px;font-size:5.5px;color:#333;">访问</div>
<div class="t" style="left:865.00px;top:276px;font-size:5.5px;color:#333;">微页面</div>
<div class="t" style="left:891.00px;top:276px;font-size:5.5px;color:#3b7be6;">查看</div>
<div class="a" style="left:584.00px;top:300.35px;width:339.50px;height:0.60px;background:#eef0f3"></div>
<div class="a" style="left:591.00px;top:289.57px;width:7.20px;height:7.20px;background:#fff;border:0.8px solid #d0d3d9;border-radius:1px"></div>
<div class="t" style="left:609.80px;top:292px;font-size:5.5px;color:#999;">9</div>
<div class="t" style="left:628.20px;top:292px;font-size:5.5px;color:#3b7be6;">20240417-0353</div>
<div class="t" style="left:690.00px;top:292px;width:32.80px;text-align:right;font-size:5.5px;color:#333;">10.00</div>
<div class="t" style="left:731.00px;top:292px;font-size:5.5px;color:#333;">2024-04-17 14:49</div>
<div class="t" style="left:813.60px;top:292px;font-size:5.5px;color:#333;">参加</div>
<div class="t" style="left:865.00px;top:292px;font-size:5.5px;color:#333;">会议</div>
<div class="t" style="left:891.00px;top:292px;font-size:5.5px;color:#3b7be6;">查看</div>
<div class="a" style="left:584.00px;top:315.90px;width:339.50px;height:0.60px;background:#eef0f3"></div>
<div class="a" style="left:591.00px;top:305.12px;width:7.20px;height:7.20px;background:#fff;border:0.8px solid #d0d3d9;border-radius:1px"></div>
<div class="t" style="left:609.80px;top:308px;font-size:5.5px;color:#999;">10</div>
<div class="t" style="left:628.20px;top:308px;font-size:5.5px;color:#3b7be6;">20240417-0352</div>
<div class="t" style="left:690.00px;top:308px;width:32.80px;text-align:right;font-size:5.5px;color:#333;">5.00</div>
<div class="t" style="left:731.00px;top:308px;font-size:5.5px;color:#333;">2024-04-17 14:49</div>
<div class="t" style="left:813.60px;top:308px;font-size:5.5px;color:#333;">访问</div>
<div class="t" style="left:865.00px;top:308px;font-size:5.5px;color:#333;">微页面</div>
<div class="t" style="left:891.00px;top:308px;font-size:5.5px;color:#3b7be6;">查看</div>
<div class="a" style="left:584.00px;top:331.45px;width:339.50px;height:0.60px;background:#eef0f3"></div>
<div class="a" style="left:591.00px;top:320.67px;width:7.20px;height:7.20px;background:#fff;border:0.8px solid #d0d3d9;border-radius:1px"></div>
<div class="t" style="left:609.80px;top:323px;font-size:5.5px;color:#999;">11</div>
<div class="t" style="left:628.20px;top:323px;font-size:5.5px;color:#3b7be6;">20240417-0351</div>
<div class="t" style="left:690.00px;top:323px;width:32.80px;text-align:right;font-size:5.5px;color:#333;">2.00</div>
<div class="t" style="left:731.00px;top:323px;font-size:5.5px;color:#333;">2024-04-17 14:49</div>
<div class="t" style="left:813.60px;top:323px;font-size:5.5px;color:#333;">访问</div>
<div class="t" style="left:865.00px;top:323px;font-size:5.5px;color:#333;">会议</div>
<div class="t" style="left:891.00px;top:323px;font-size:5.5px;color:#3b7be6;">查看</div>
<div class="a" style="left:680.20px;top:161.00px;width:0.60px;height:171.00px;background:#eceef2"></div>
<div class="a" style="left:886.40px;top:161.00px;width:0.60px;height:171.00px;background:#eceef2"></div>
<div class="a" style="left:923.50px;top:161.00px;width:3.80px;height:172.00px;background:#f3f4f6"></div>
<div class="a" style="left:923.80px;top:161.00px;width:3.40px;height:118.00px;background:#c9cdd4;border-radius:1px"></div>
<div class="a" style="left:584.00px;top:333.10px;width:339.50px;height:3.30px;background:#f3f4f6"></div>
<div class="a" style="left:584.00px;top:333.10px;width:185.60px;height:3.30px;background:#c9cdd4;border-radius:1px"></div>
<div class="t" style="left:846.00px;top:342px;font-size:5.6px;color:#555;">共 16 条</div>
<div class="t" style="left:876.40px;top:342px;font-size:5.6px;color:#555;">1/1</div>
<svg class="a" style="left:885.30px;top:341.50px" width="6.00" height="4.20"><polyline points="1,1 3.00,3.20 5.00,1" fill="none" stroke="#888" stroke-width="0.6"/></svg>
<div class="a" style="left:895.30px;top:337.70px;width:11.20px;height:11.70px;background:#f4f5f7;border:0.6px solid #e2e4e8;border-radius:1.5px"></div>
<div class="a" style="left:909.30px;top:337.70px;width:11.30px;height:11.70px;background:#f4f5f7;border:0.6px solid #e2e4e8;border-radius:1.5px"></div>
<div class="a" style="left:900px;top:342px;width:2.6px;height:2.6px;border-left:0.6px solid #bbb;border-bottom:0.6px solid #bbb;transform:rotate(45deg)"></div>
<div class="a" style="left:913.8px;top:342px;width:2.6px;height:2.6px;border-right:0.6px solid #bbb;border-top:0.6px solid #bbb;transform:rotate(45deg)"></div>
<div class="a" style="left:464.60px;top:277.00px;width:107.70px;height:28.40px;border:1.5px solid #e8543c;border-radius:3px"></div>
<svg class="a" style="left:0;top:0" width="1024" height="423"><polygon points="518.39,268.18 564.44,212.53 560.34,211.01 571.40,207.30 569.47,218.80 567.33,215.00 519.61,269.22" fill="#ec4b2f" stroke="#ec4b2f" stroke-width="0.6" stroke-linejoin="round"/></svg>
</body></html>
